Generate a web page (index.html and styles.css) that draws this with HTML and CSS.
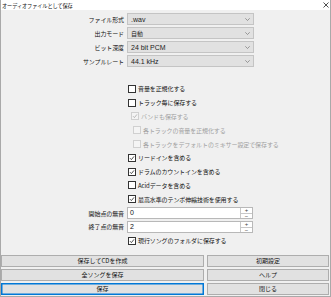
FILE: index.html
```html
<!DOCTYPE html>
<html lang="ja">
   <head>
      <meta charset="UTF-8">
      <meta name="viewport" content="width=device-width, initial-scale=1.0">
      <title>オーディオファイルとして保存</title>
      <link rel="stylesheet" href="styles.css">
   </head>
   <body>
      <div class="window">
         <div class="titlebar">
            <span class="title">オーディオファイルとして保存</span>
            <svg class="close" width="6" height="6" viewBox="0 0 6 6"><path d="M0.5 0.5 L5.5 5.5 M5.5 0.5 L0.5 5.5" stroke="#222" stroke-width="0.8"/></svg>
         </div>
         <div class="form">
            <div class="field">
               <span class="lbl">ファイル形式</span>
               <div class="select"><span class="val">.wav</span><svg class="chev" width="5" height="3" viewBox="0 0 5 3"><path d="M0.3 0.3 L2.5 2.5 L4.7 0.3" fill="none" stroke="#777" stroke-width="0.7"/></svg></div>
            </div>
            <div class="field">
               <span class="lbl">出力モード</span>
               <div class="select"><span class="val jp">自動</span><svg class="chev" width="5" height="3" viewBox="0 0 5 3"><path d="M0.3 0.3 L2.5 2.5 L4.7 0.3" fill="none" stroke="#777" stroke-width="0.7"/></svg></div>
            </div>
            <div class="field">
               <span class="lbl">ビット深度</span>
               <div class="select"><span class="val">24 bit PCM</span><svg class="chev" width="5" height="3" viewBox="0 0 5 3"><path d="M0.3 0.3 L2.5 2.5 L4.7 0.3" fill="none" stroke="#777" stroke-width="0.7"/></svg></div>
            </div>
            <div class="field">
               <span class="lbl">サンプルレート</span>
               <div class="select"><span class="val">44.1 kHz</span><svg class="chev" width="5" height="3" viewBox="0 0 5 3"><path d="M0.3 0.3 L2.5 2.5 L4.7 0.3" fill="none" stroke="#777" stroke-width="0.7"/></svg></div>
            </div>

            <div class="gap"></div>

            <div class="check"><span class="box"></span>音量を正規化する</div>
            <div class="check"><span class="box"></span>トラック毎に保存する</div>
            <div class="check sub disabled"><span class="box"><svg width="6" height="6" viewBox="0 0 6 6"><path d="M1 3.2 L2.4 4.6 L5 1.4" fill="none" stroke="#aaa" stroke-width="0.8"/></svg></span>バンドも保存する</div>
            <div class="check sub2 disabled"><span class="box"></span>各トラックの音量を正規化する</div>
            <div class="check sub2 disabled"><span class="box"></span>各トラックをデフォルトのミキサー設定で保存する</div>
            <div class="check"><span class="box"><svg width="6" height="6" viewBox="0 0 6 6"><path d="M1 3.2 L2.4 4.6 L5 1.4" fill="none" stroke="#222" stroke-width="0.8"/></svg></span>リードインを含める</div>
            <div class="check"><span class="box"><svg width="6" height="6" viewBox="0 0 6 6"><path d="M1 3.2 L2.4 4.6 L5 1.4" fill="none" stroke="#222" stroke-width="0.8"/></svg></span>ドラムのカウントインを含める</div>
            <div class="check"><span class="box"></span>Acidデータを含める</div>
            <div class="check"><span class="box"><svg width="6" height="6" viewBox="0 0 6 6"><path d="M1 3.2 L2.4 4.6 L5 1.4" fill="none" stroke="#222" stroke-width="0.8"/></svg></span>最高水準のテンポ伸縮技術を使用する</div>

            <div class="field spin-row">
               <span class="lbl">開始点の無音</span>
               <div class="spin"><span class="num">0</span><div class="arrows"><span>+</span><span>−</span></div></div>
            </div>
            <div class="field spin-row">
               <span class="lbl">終了点の無音</span>
               <div class="spin"><span class="num">2</span><div class="arrows"><span>+</span><span>−</span></div></div>
            </div>

            <div class="check"><span class="box"><svg width="6" height="6" viewBox="0 0 6 6"><path d="M1 3.2 L2.4 4.6 L5 1.4" fill="none" stroke="#222" stroke-width="0.8"/></svg></span>現行ソングのフォルダに保存する</div>
         </div>
         <div class="buttons">
            <button>保存してCDを作成</button>
            <button>初期設定</button>
            <button>全ソングを保存</button>
            <button>ヘルプ</button>
            <button class="default">保存</button>
            <button>閉じる</button>
         </div>
      </div>
   </body>
</html>
```

FILE: styles.css
```css
/* Save as audio file dialog */
body {
margin: 0;
font-family: "Noto Sans CJK JP", "Liberation Sans", sans-serif;
font-size: 6px;
color: #111;
}
.window {
width: 331px;
height: 297px;
box-sizing: border-box;
border: 1px solid #a9a9a9;
border-top: none;
background-color: #f0f0f0;
display: flex;
flex-direction: column;
}
.titlebar {
height: 10px;
background-color: white;
display: flex;
align-items: center;
justify-content: space-between;
padding: 0 1px 0 1px;
}
.title {
font-size: 5.2px;
letter-spacing: -0.1px;
}
.form {
padding-top: 2px;
display: flex;
flex-direction: column;
}
.field {
height: 14px;
display: flex;
align-items: center;
}
.lbl {
width: 123px;
text-align: right;
padding-right: 3px;
letter-spacing: -0.1px;
}
.select {
height: 10px;
background-color: #e1e1e1;
border: 1px solid #c4c4c4;
display: flex;
align-items: center;
justify-content: space-between;
padding: 0 3px 0 3px;
width: 119px;
}
.val {
font-family: "Liberation Sans", sans-serif;
font-size: 7px;
color: #222;
}
.val.jp {
font-family: "Noto Sans CJK JP", sans-serif;
font-size: 6px;
}
.gap {
height: 14px;
}
.check {
height: 13.8px;
display: flex;
align-items: center;
padding-left: 127px;
letter-spacing: -0.1px;
}
.check.sub {
padding-left: 130px;
}
.check.sub2 {
padding-left: 132px;
}
.box {
width: 6px;
height: 6px;
border: 1px solid #333;
background-color: white;
margin-right: 2px;
display: flex;
}
.disabled {
color: #a0a0a0;
}
.disabled .box {
border-color: #d0d0d0;
background-color: #f4f4f4;
}
.spin-row {
height: 13.8px;
}
.spin {
width: 124px;
height: 10px;
background-color: white;
border: 1px solid #b8b8b8;
display: flex;
justify-content: space-between;
}
.num {
font-family: "Liberation Sans", sans-serif;
font-size: 7px;
padding-left: 2px;
line-height: 10px;
}
.arrows {
width: 11px;
border-left: 1px solid #c8c8c8;
display: flex;
flex-direction: column;
}
.arrows span {
flex: 1;
font-family: "Liberation Sans", sans-serif;
font-size: 6px;
line-height: 5px;
text-align: center;
color: #444;
}
.arrows span + span {
border-top: 1px solid #c8c8c8;
}
.buttons {
margin-top: 7px;
padding: 0 1px 0 0;
display: grid;
grid-template-columns: 203px 1fr;
column-gap: 3px;
row-gap: 2px;
}
button {
height: 12px;
padding: 0;
font-family: "Noto Sans CJK JP", sans-serif;
font-size: 6px;
color: #111;
background-color: #e1e1e1;
border: 1px solid #adadad;
}
button.default {
border-color: #0078d7;
box-shadow: inset 0 0 0 0.5px #0078d7;
}
```
